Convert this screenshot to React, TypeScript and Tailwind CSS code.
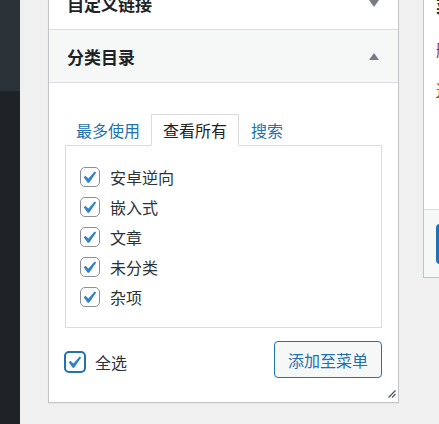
import React from 'react';

const font = "font-['Noto_Sans_CJK_SC','Noto_Sans',sans-serif]";

function Check({ className = '' }: { className?: string }) {
  return (
    <svg viewBox="3.5 2 15 15" className={className} fill="#3582c4">
      <path d="M14.83 4.89l1.34.94-5.81 8.38H9.02L5.78 9.67l1.34-1.25 2.57 2.4z" />
    </svg>
  );
}

function Arrow({ up }: { up?: boolean }) {
  return (
    <svg width="10" height="7" viewBox="0 0 10 7" fill="#787c82">
      {up ? <polygon points="5,0 10,7 0,7" /> : <polygon points="0,0 10,0 5,7" />}
    </svg>
  );
}

const categories = ['安卓逆向', '嵌入式', '文章', '未分类', '杂项'];

export default function App() {
  return (
    <div className={`flex h-[424px] w-[439px] overflow-hidden bg-[#f0f0f1] ${font}`}>
      {/* admin menu strip */}
      <div className="flex w-[20px] shrink-0 flex-col">
        <div className="h-[91px] bg-[#2c3338]" />
        <div className="flex-1 bg-[#1d2327]" />
      </div>

      {/* accordion panel */}
      <div className="ml-[28px] w-[351px] shrink-0 self-start">
        <div className="relative border-x border-b border-[#c3c4c7] bg-white shadow-[0_1px_1px_rgba(0,0,0,0.04)]">
          <div className="-mt-[23px] flex h-[53px] items-center justify-between border-b border-[#dcdcde] pl-[18px] pr-[19px]">
            <span className="text-[17px] font-bold leading-none text-[#1d2327]">自定义链接</span>
            <Arrow />
          </div>
          <div className="flex h-[53px] items-center justify-between border-b border-[#dcdcde] bg-[#f6f7f7] pl-[18px] pr-[19px]">
            <span className="text-[17px] font-bold leading-none text-[#1d2327]">分类目录</span>
            <Arrow up />
          </div>

          <div className="px-[16px] pb-[24px] pt-[31px]">
            <div className="relative z-10 flex text-[16px] leading-none">
              <div className="flex h-[32px] items-center px-[11px] text-[#2271b1]">最多使用</div>
              <div className="flex h-[32px] items-center border border-b-white border-[#dcdcde] bg-white px-[11px] text-[#1d2327]">查看所有</div>
              <div className="flex h-[32px] items-center px-[12px] text-[#2271b1]">搜索</div>
            </div>
            <div className="-mt-px border border-[#dcdcde] pb-[15px] pl-[14px] pt-[16px]">
              {categories.map((c) => (
                <div key={c} className="flex h-[30px] items-center">
                  <span className="flex h-[20px] w-[20px] items-center justify-center rounded-[5px] border border-[#8c8f94] bg-white">
                    <Check className="h-[18px] w-[18px]" />
                  </span>
                  <span className="ml-[10px] text-[16px] leading-none text-[#2c3338]">{c}</span>
                </div>
              ))}
            </div>

            <div className="mt-[13px] flex items-center justify-between">
              <label className="-ml-[1px] mt-[5px] flex items-center">
                <span className="flex h-[22px] w-[22px] items-center justify-center rounded-[5px] border-2 border-[#2271b1] bg-white">
                  <Check className="h-[18px] w-[18px]" />
                </span>
                <span className="ml-[9px] text-[16px] leading-none text-[#2c3338]">全选</span>
              </label>
              <button className="h-[37px] rounded-[4px] border border-[#2271b1] bg-[#f6f7f7] px-[13px] text-[16px] leading-none text-[#2271b1]">
                添加至菜单
              </button>
            </div>
          </div>

          <svg className="absolute bottom-[4px] right-[2px]" width="8" height="8" viewBox="0 0 8 8" stroke="#50575e" strokeWidth="1.2">
            <line x1="0.5" y1="7.5" x2="7.5" y2="0.5" />
            <line x1="4" y1="7.5" x2="7.5" y2="4" />
          </svg>
        </div>
      </div>

      {/* menu structure panel, cut off at the edge */}
      <div className="ml-[24px] w-[200px] shrink-0 self-start">
        <div className="border border-t-0 border-[#c3c4c7] bg-white">
          <div className="h-[209px] overflow-hidden pl-[12px]">
            <div className="-mt-[3px] text-[17px] font-bold leading-[18px] text-[#1d2327]">菜单结构</div>
            <div className="mt-[26px] text-[16px] leading-[16px] text-[#8a2424]">删除菜单</div>
            <div className="mt-[24px] text-[16px] leading-[16px] text-[#996800] underline">选择菜单</div>
          </div>
          <div className="flex h-[68px] items-center border-t border-[#dcdcde] bg-[#f6f7f7] pl-[12px]">
            <div className="h-[40px] w-[100px] rounded-[4px] bg-[#2271b1]" />
          </div>
        </div>
      </div>
    </div>
  );
}
